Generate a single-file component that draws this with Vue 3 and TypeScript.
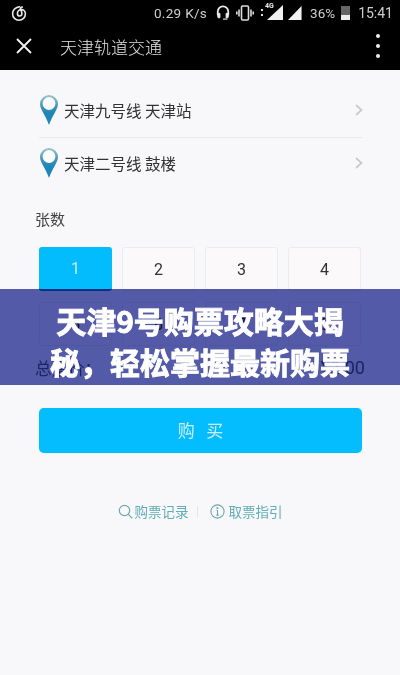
<script setup lang="ts">
const stations = ['天津九号线 天津站', '天津二号线 鼓楼']
const counts = [1, 2, 3, 4, 5, 6, 7, 8]
</script>

<template>
  <div class="page">
    <header class="head">
      <div class="status">
        <svg class="netease" width="16" height="16" viewBox="0 0 20 20" fill="none" stroke="#e8e8e8" stroke-width="2">
          <path d="M11.500 1.800C6 2.800 2 6 2 11a8 8 0 0 0 16 0c0-3-2.300-5.200-5-5.200-3 0-5 2.200-5 4.800 0 1.800 1.200 3.200 2.800 3.200 1.800 0 2.800-1.300 2.800-3.100 0-2.400-1.300-4.300-1.800-6-.3-1.100.9-2.200 3-2" />
        </svg>
        <span class="speed">0.29 K/s</span>
        <svg class="ic-head" width="14" height="17" viewBox="0 0 16 18" fill="none" stroke="#eee" stroke-width="2">
          <path d="M2 12V8a6 6 0 0 1 12 0v4" />
          <path d="M2 10h2.500v5H3a1 1 0 0 1-1-1zM14 10h-2.500v5H13a1 1 0 0 0 1-1z" fill="#eee" stroke-width="1" />
          <path d="M8 16.500h5" stroke-width="1.300" />
        </svg>
        <svg class="ic-vib" width="18" height="16" viewBox="0 0 18 16" fill="none" stroke="#ddd" stroke-width="1.600">
          <rect x="5.500" y="1" width="7" height="14" rx="1.200" />
          <path d="M3 4.500v7M15 4.500v7M.8 6.500v3M17.200 6.500v3" />
        </svg>
        <span class="dots-small"><i></i><i></i></span>
        <span class="signal-wrap">
          <span class="tag4g">4G</span>
          <svg width="17" height="15" viewBox="0 0 17 15"><path d="M17 0v15H1z" fill="#f2f2f2" /></svg>
        </span>
        <svg class="sig2" width="14" height="14" viewBox="0 0 15 15"><path d="M14.500 0v15H0z" fill="#f2f2f2" /></svg>
        <span class="batt-text">36%</span>
        <span class="batt"><span class="batt-fill"></span></span>
        <span class="time">15:41</span>
      </div>
      <div class="bar">
        <svg class="close" width="16" height="16" viewBox="0 0 16 16" stroke="#f4f4f4" stroke-width="1.800" fill="none">
          <path d="M1 1l14 14M15 1L1 15" />
        </svg>
        <span class="title">天津轨道交通</span>
        <span class="more"><i></i><i></i><i></i></span>
      </div>
    </header>

    <main class="content">
      <ul class="stations">
        <li v-for="s in stations" :key="s" class="station">
          <svg class="pin" width="20" height="32" viewBox="0 0 20 32">
            <defs>
              <linearGradient id="pinFill" x1="0" y1="0" x2="0" y2="1">
                <stop offset="0" stop-color="#9cc6cf" />
                <stop offset="0.4" stop-color="#3f93b4" />
                <stop offset="0.6" stop-color="#1f86b9" />
                <stop offset="1" stop-color="#1f86b9" />
              </linearGradient>
            </defs>
            <path d="M10 1a9 9 0 0 0-9 9c0 5 5.500 11 9 21 3.500-10 9-16 9-21a9 9 0 0 0-9-9z" fill="url(#pinFill)" />
            <circle cx="10" cy="9.500" r="6.400" fill="#fbfbfc" />
          </svg>
          <span class="name">{{ s }}</span>
          <svg class="chev" width="8" height="12" viewBox="0 0 8 12" fill="none" stroke="#c9c9cb" stroke-width="1.700">
            <path d="M1 1l5.500 5L1 11" />
          </svg>
        </li>
      </ul>

      <div class="label">张数</div>
      <div class="grid">
        <button v-for="n in counts" :key="n" class="cell" :class="{ active: n === 1 }">{{ n }}</button>
      </div>

      <div class="total">
        <span>总票价：</span>
        <span class="price">¥2.00</span>
      </div>

      <button class="buy">购&nbsp;&nbsp;&nbsp;买</button>

      <div class="links">
        <svg width="15" height="15" viewBox="0 0 15 15" fill="none" stroke="#6fa6ad" stroke-width="1.200">
          <circle cx="6.500" cy="6.500" r="5.200" />
          <path d="M10.300 10.300l4 4" />
        </svg>
        <span class="link first">购票记录</span>
        <span class="sep"></span>
        <svg class="info" width="15" height="15" viewBox="0 0 15 15" fill="none" stroke="#6fa6ad" stroke-width="1.100">
          <circle cx="7.500" cy="7.500" r="6.600" />
          <path d="M7.500 6.300v4.800M6.300 11.100h2.400M6.500 6.300h1" />
          <circle cx="7.400" cy="4" r=".5" />
        </svg>
        <span class="link">取票指引</span>
      </div>
    </main>

    <div class="banner"><span class="banner-text">天津9号购票攻略大揭秘，轻松掌握最新购票</span></div>
  </div>
</template>

<style>
html, body { margin: 0; padding: 0; background: #f8f8fa; }
</style>

<style scoped>
.page {
  position: relative;
  width: 400px;
  height: 675px;
  overflow: hidden;
  background: #f8f8fa;
  font-family: "Roboto", "Noto Sans CJK SC", sans-serif;
}
.head { height: 70px; background: #000; color: #eee; }
.status {
  height: 25px;
  display: flex;
  align-items: center;
  padding: 0 7px 0 11px;
  font-size: 13.500px;
  color: #cfcfcf;
}
.netease { margin-right: auto; }
.speed { margin-right: 9px; letter-spacing: .3px; }
.ic-head { margin-right: 6px; }
.ic-vib { margin-right: 7px; }
.dots-small { display: flex; flex-direction: column; gap: 3px; margin-right: 3px; }
.dots-small i { width: 2px; height: 2px; background: #ddd; }
.signal-wrap { position: relative; display: flex; margin-right: 5px; }
.tag4g { position: absolute; left: -1px; top: -3px; font-size: 7px; font-weight: 700; color: #eee; }
.sig2 { margin-right: 8px; }
.batt-text { margin-right: 6px; }
.batt {
  width: 9px;
  height: 14px;
  background: #666;
  display: flex;
  align-items: flex-end;
  margin-right: 8px;
}
.batt-fill { width: 100%; height: 5px; background: #f0f0f0; }
.time { font-size: 14px; }
.bar {
  height: 45px;
  display: flex;
  align-items: center;
  padding: 0 20px 3px 16px;
  box-sizing: border-box;
}
.close { margin-right: 28px; }
.title {
  font-size: 17px;
  color: #e2e2e2;
  font-family: "Noto Sans CJK SC", sans-serif;
  font-weight: 300;
}
.more { margin-left: auto; display: flex; flex-direction: column; gap: 6px; }
.more i { width: 4px; height: 4px; border-radius: 50%; background: #eee; }

.content { padding: 0 38px 0 39px; }
.stations { list-style: none; margin: 0; padding: 0; }
.station {
  height: 50px;
  display: flex;
  align-items: center;
  color: #333;
  font-size: 15.500px;
  font-family: "Noto Sans CJK SC", sans-serif;
}
.station:first-child { height: 68px; padding-top: 13px; box-sizing: border-box; border-bottom: 1px solid #e9e9ea; }
.pin { margin-right: 5px; flex: none; }
.name { flex: 1; }
.chev { margin-right: -1px; }
.label {
  margin: 21px 0 0 -4px;
  height: 20px;
  line-height: 20px;
  font-size: 15px;
  color: #444;
  font-family: "Noto Sans CJK SC", sans-serif;
}
.grid {
  margin-top: 18px;
  display: grid;
  grid-template-columns: repeat(4, 73px);
  column-gap: 10px;
  row-gap: 11px;
}
.cell {
  height: 44px;
  padding: 0;
  background: #fbf9fa;
  border: 1px solid #ecebed;
  border-radius: 3px;
  font: 16px "Roboto", sans-serif;
  color: #333;
}
.cell.active {
  background: #03bcfd;
  border: 0;
  border-bottom: 2px solid #1a86c2;
  color: #c8f0f4;
}
.total {
  margin: 10px -3px 0 -4px;
  height: 24px;
  line-height: 24px;
  display: flex;
  justify-content: space-between;
  font-size: 16.500px;
  color: #4f6296;
  font-family: "Noto Sans CJK SC", sans-serif;
}
.price { font-family: "Roboto", sans-serif; font-size: 18px; }
.buy {
  display: block;
  width: 323px;
  height: 45px;
  margin-top: 28px;
  padding: 0 0 3px;
  border: 0;
  border-radius: 5px;
  background: #03bdfe;
  box-shadow: 0 0 1px #7fe6ff;
  color: #cdeef2;
  font-size: 17px;
  font-family: "Noto Sans CJK SC", sans-serif;
}
.links {
  margin-top: 50px;
  display: flex;
  align-items: center;
  justify-content: center;
  height: 16px;
  color: #62adb6;
  font-size: 13.500px;
  font-family: "Noto Sans CJK SC", sans-serif;
  padding-right: 1px;
}
.link.first { margin-left: 2px; }
.sep { width: 1px; height: 11px; background: #e4e4e4; margin: 0 12px 0 8px; }
.info { margin-right: 4px; }

.banner {
  position: absolute;
  left: 0;
  right: 0;
  top: 289px;
  height: 96px;
  box-sizing: border-box;
  padding: 11px 48px 0;
  color: #fff;
  font-size: 30px;
  line-height: 41px;
  font-weight: 700;
  text-align: center;
  font-family: "Noto Sans CJK SC", sans-serif;
}
.banner::before {
  content: "";
  position: absolute;
  inset: 0;
  background: #555cab;
  mix-blend-mode: multiply;
}
.banner-text {
  position: relative;
  -webkit-text-stroke: .9px #fff;
}
</style>
